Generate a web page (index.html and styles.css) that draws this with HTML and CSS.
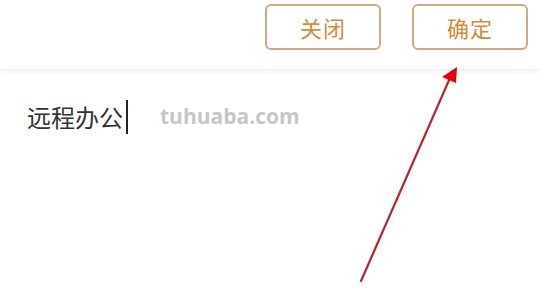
FILE: index.html
```html
<!DOCTYPE html>
<html>
<head>
<meta charset="utf-8">
<link rel="stylesheet" href="styles.css">
</head>
<body>
<div class="page">
  <header class="bar">
    <button class="btn">关闭</button>
    <button class="btn">确定</button>
  </header>
  <main class="content">
    <div class="input"><span class="txt">远程办公</span><span class="caret"></span></div>
  </main>
  <div class="watermark">tuhuaba.com</div>
  <svg class="arrow" width="540" height="300" viewBox="0 0 540 300">
    <line x1="361" y1="281" x2="450" y2="78" stroke="#b8232d" stroke-width="2.2" stroke-linecap="round"/>
    <polygon points="457,67 442,77 456,83" fill="#e8000f"/>
  </svg>
</div>
</body>
</html>
```
FILE: styles.css
```css
html, body {
  margin: 0;
  padding: 0;
  background: #fff;
}
.page {
  position: relative;
  width: 540px;
  height: 300px;
  overflow: hidden;
  font-family: "Noto Sans CJK SC", "Noto Sans", sans-serif;
}
.bar {
  height: 70px;
  box-sizing: border-box;
  padding: 4px 12px 0 0;
  display: flex;
  justify-content: flex-end;
  align-items: flex-start;
  gap: 31px;
  background: #fff;
  box-shadow: 0 2px 5px rgba(0,0,0,0.06);
  border-bottom: 1px solid #f1f1f1;
  position: relative;
  z-index: 1;
}
.btn {
  width: 116px;
  height: 46px;
  border: 2px solid #d0aa80;
  border-radius: 6px;
  background: #fff;
  color: #d48a3c;
  font-family: "Noto Sans CJK SC", sans-serif;
  font-size: 22px;
  letter-spacing: 1px;
  padding: 0;
}
.content {
  padding: 30px 0 0 27px;
}
.input {
  display: flex;
  align-items: center;
  height: 34px;
}
.txt {
  font-size: 24px;
  color: #333;
  line-height: 34px;
}
.caret {
  width: 2px;
  height: 34px;
  background: #222;
  margin-left: 3px;
}
.watermark {
  position: absolute;
  left: 160px;
  top: 102px;
  font-family: "Open Sans", "DejaVu Sans", sans-serif;
  font-weight: 700;
  font-size: 21px;
  color: #c6c6c6;
}
.arrow {
  position: absolute;
  left: 0;
  top: 0;
  z-index: 2;
}
```
